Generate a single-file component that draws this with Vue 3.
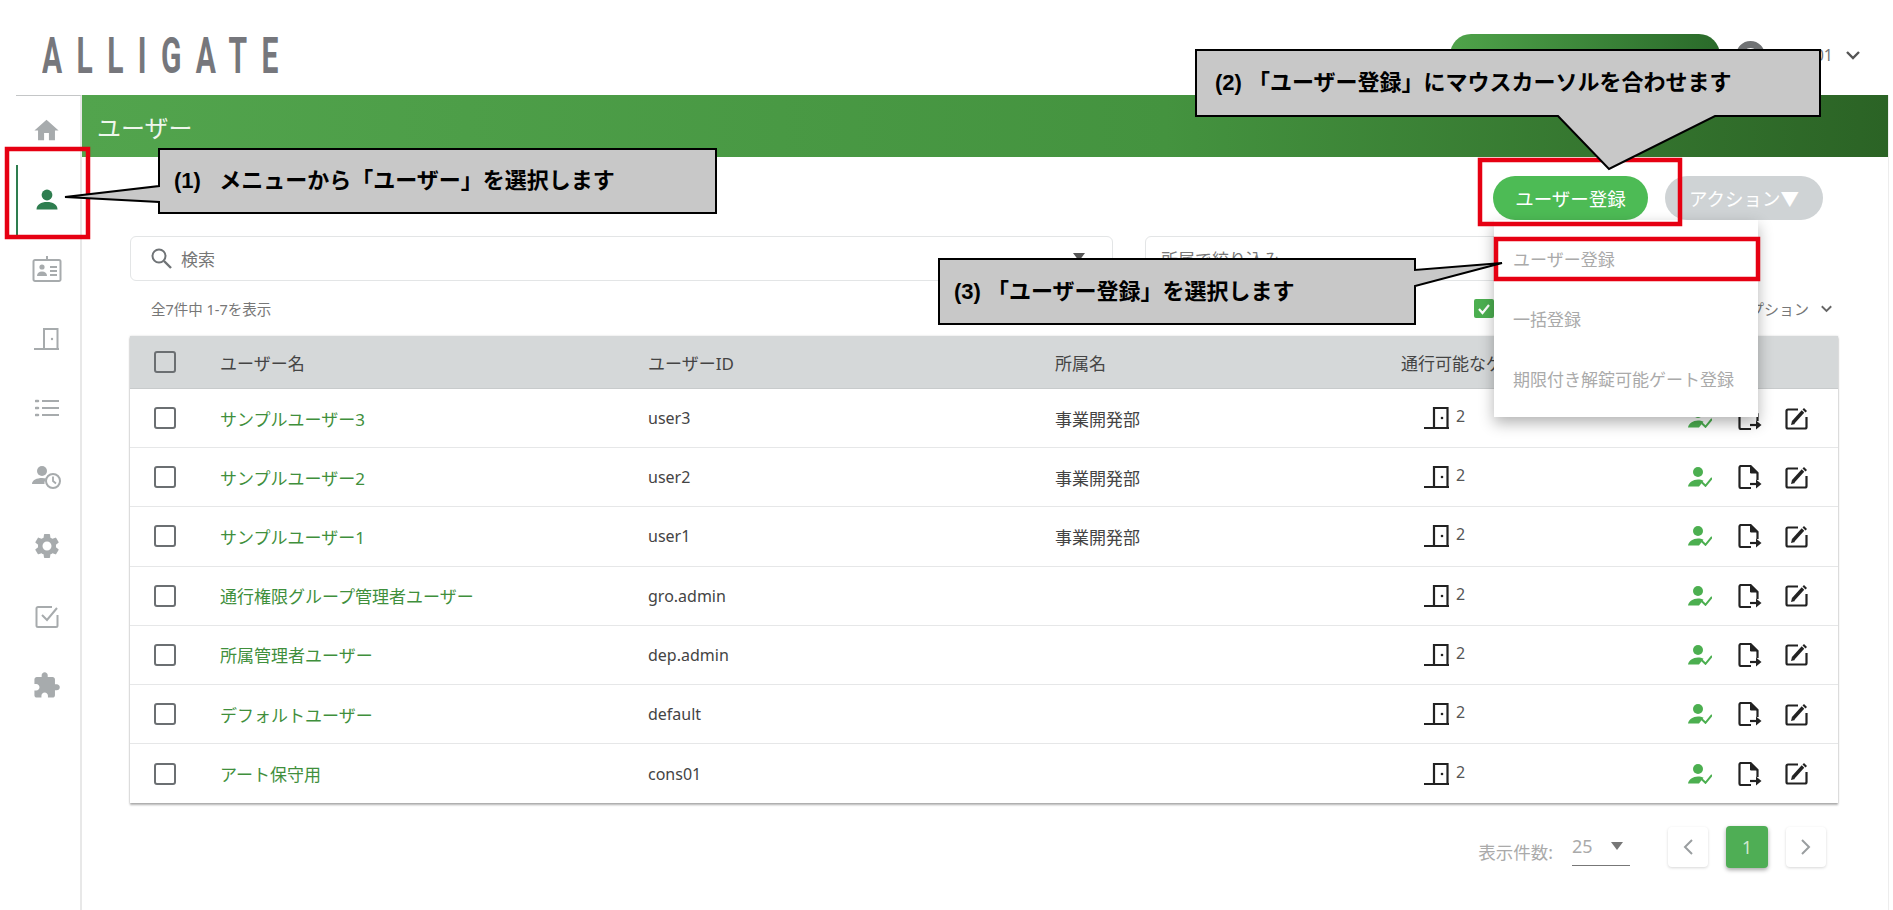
<script setup>
const users = [
  { name: "サンプルユーザー3", id: "user3", dept: "事業開発部" },
  { name: "サンプルユーザー2", id: "user2", dept: "事業開発部" },
  { name: "サンプルユーザー1", id: "user1", dept: "事業開発部" },
  { name: "通行権限グループ管理者ユーザー", id: "gro.admin", dept: "" },
  { name: "所属管理者ユーザー", id: "dep.admin", dept: "" },
  { name: "デフォルトユーザー", id: "default", dept: "" },
  { name: "アート保守用", id: "cons01", dept: "" },
]
</script>

<template>
  <div class="page">
    <header class="top">
      <div class="logo">ALLIGATE</div>
      <div class="top-right">
        <div class="top-pill"></div>
        <div class="avatar"></div>
        <span class="account">cons01</span>
        <svg class="chev" viewBox="0 0 14 9"><path d="M1 1l6 6 6-6" /></svg>
      </div>
    </header>

    <div class="body">
      <aside class="side">
        <div class="nav-item">
          <svg width="29" height="29" viewBox="0 0 24 24" fill="#a7abad"><path d="M10 20v-6h4v6h5v-8h3L12 3 2 12h3v8z" /></svg>
        </div>
        <div class="nav-item active">
          <svg width="22" height="21" viewBox="0 0 22 21" fill="#2e7d4f">
            <circle cx="11" cy="6" r="5.4" />
            <path d="M0.5 20.5c0-5 4.5-7.5 10.500-7.500s10.500 2.500 10.500 7.500z" />
          </svg>
        </div>
        <div class="nav-item">
          <svg width="30" height="26" viewBox="0 0 30 26" fill="none" stroke="#a7abad" stroke-width="2">
            <path d="M3 4h24a1.500 1.500 0 0 1 1.500 1.500v18a1.500 1.500 0 0 1-1.500 1.500H3a1.500 1.500 0 0 1-1.500-1.500v-18A1.500 1.500 0 0 1 3 4z" />
            <path d="M15 0v5M18 11h7M18 15h7M18 19h7" />
            <circle cx="10" cy="11" r="2.600" fill="#a7abad" stroke="none" />
            <path d="M5 20c0-3 2-4.500 5-4.500s5 1.500 5 4.500z" fill="#a7abad" stroke="none" />
          </svg>
        </div>
        <div class="nav-item">
          <svg width="25" height="22" viewBox="0 0 25 22" fill="none" stroke="#a7abad" stroke-width="2">
            <path d="M0 21h25M10 21V1h13.500v20" />
            <circle cx="18" cy="11" r="1.200" fill="#a7abad" stroke="none" />
          </svg>
        </div>
        <div class="nav-item">
          <svg width="24" height="20" viewBox="0 0 24 20" fill="none" stroke="#a7abad" stroke-width="2.200">
            <path d="M7 3h17M7 10h17M7 17h17" />
            <path d="M1 3h2M1 10h2M1 17h2" stroke-width="2.600" stroke-linecap="round" />
          </svg>
        </div>
        <div class="nav-item">
          <svg width="30" height="25" viewBox="0 0 30 25">
            <circle cx="10" cy="6" r="5" fill="#a7abad" />
            <path d="M0 19c0-4 5-6 10-6 1.500 0 3 .2 4.500.6-1.500 1.500-2.200 3.400-2 5.400z" fill="#a7abad" />
            <circle cx="21" cy="16" r="7" fill="#fff" stroke="#a7abad" stroke-width="2" />
            <path d="M21 11.500V16l3 2.500" fill="none" stroke="#a7abad" stroke-width="1.800" />
          </svg>
        </div>
        <div class="nav-item">
          <svg width="30" height="30" viewBox="0 0 24 24" fill="#a7abad"><path d="M19.14 12.940c.04-.3.06-.61.06-.94 0-.32-.02-.64-.07-.94l2.030-1.580a.49.49 0 0 0 .12-.61l-1.920-3.320a.488.488 0 0 0-.59-.22l-2.390.96c-.5-.38-1.030-.7-1.620-.94l-.36-2.540a.484.484 0 0 0-.48-.41h-3.840c-.24 0-.43.17-.47.41l-.36 2.540c-.59.24-1.130.57-1.620.94l-2.390-.96c-.22-.08-.47 0-.59.22L2.740 8.870c-.12.21-.08.47.12.61l2.030 1.580c-.05.3-.09.63-.09.94s.02.64.07.94l-2.030 1.580a.49.49 0 0 0-.12.61l1.920 3.320c.12.22.37.29.59.22l2.390-.96c.5.38 1.030.7 1.620.94l.36 2.540c.05.24.24.41.48.41h3.840c.24 0 .44-.17.47-.41l.36-2.540c.59-.24 1.130-.56 1.620-.94l2.390.96c.22.08.47 0 .59-.22l1.920-3.320c.12-.22.07-.47-.12-.61l-2.010-1.580zM12 15.600c-1.980 0-3.600-1.620-3.600-3.600s1.620-3.600 3.600-3.600 3.600 1.620 3.600 3.600-1.620 3.600-3.600 3.600z" /></svg>
        </div>
        <div class="nav-item">
          <svg width="24" height="24" viewBox="0 0 24 24" fill="none" stroke="#a7abad" stroke-width="2">
            <path d="M17 3H3a1.500 1.500 0 0 0-1.500 1.500v17A1.500 1.500 0 0 0 3 23h18a1.500 1.500 0 0 0 1.500-1.500V11" />
            <path d="M7 11l5 5 10-12" />
          </svg>
        </div>
        <div class="nav-item">
          <svg width="29" height="29" viewBox="0 0 24 24" fill="#a7abad"><path d="M20.500 11H19V7c0-1.100-.9-2-2-2h-4V3.500C13 2.120 11.880 1 10.500 1S8 2.120 8 3.500V5H4c-1.100 0-1.990.9-1.990 2v3.800H3.500c1.490 0 2.700 1.210 2.700 2.700s-1.210 2.700-2.700 2.700H2V20c0 1.100.9 2 2 2h3.800v-1.500c0-1.490 1.210-2.700 2.700-2.700 1.490 0 2.700 1.210 2.700 2.700V22H17c1.100 0 2-.9 2-2v-4h1.500c1.380 0 2.500-1.120 2.500-2.500S21.880 11 20.500 11z" /></svg>
        </div>
      </aside>

      <main class="main">
        <div class="title-bar">ユーザー</div>

        <div class="content">
          <div class="actions">
            <button class="btn btn-green">ユーザー登録</button>
            <button class="btn btn-gray">アクション▼</button>
          </div>

          <div class="filters">
            <div class="field field-search">
              <svg width="21" height="21" viewBox="0 0 21 21" fill="none" stroke="#6f7376" stroke-width="2">
                <circle cx="8" cy="8" r="6.500" />
                <path d="M13 13l7 7" stroke-width="2.400" />
              </svg>
              <span>検索</span>
              <i class="caret"></i>
            </div>
            <div class="field field-dept"><span>所属で絞り込み</span></div>
          </div>

          <div class="info">
            <span>全7件中 1-7を表示</span>
            <span class="info-right">
              <i class="green-check">
                <svg width="14" height="14" viewBox="0 0 14 14" fill="none" stroke="#fff" stroke-width="2.200"><path d="M2 7l3.500 4L12 3" /></svg>
              </i>
              <span class="option">オプション</span>
              <svg class="chev small" viewBox="0 0 14 9"><path d="M1 1l6 6 6-6" /></svg>
            </span>
          </div>

          <div class="table">
            <div class="row head">
              <i class="box"></i>
              <span>ユーザー名</span>
              <span>ユーザーID</span>
              <span>所属名</span>
              <span>通行可能なゲート</span>
              <span></span>
            </div>
            <div v-for="u in users" :key="u.id" class="row">
              <i class="box"></i>
              <span class="name">{{ u.name }}</span>
              <span class="uid">{{ u.id }}</span>
              <span>{{ u.dept }}</span>
              <span class="gates">
                <svg width="25" height="22" viewBox="0 0 25 22" fill="none" stroke="#222" stroke-width="2.200">
                  <path d="M0 21h25M10 21V1h13.500v20" />
                  <circle cx="18" cy="11" r="1.300" fill="#222" stroke="none" />
                </svg>
                <span class="gate-count">2</span>
              </span>
              <span class="row-icons">
                <svg width="24" height="20" viewBox="0 0 24 20">
                  <circle cx="10" cy="5" r="5" fill="#4caf50" />
                  <path d="M0 19.500c.5-4 5-7 10-7 2 0 4 .4 5.500 1.200L11 19.500z" fill="#4caf50" />
                  <path d="M13 14.500l4.500 4.300L24 11" fill="none" stroke="#4caf50" stroke-width="2" />
                </svg>
                <svg width="24" height="24" viewBox="0 0 24 24" fill="none" stroke="#222" stroke-width="2.200">
                  <path d="M13 23H3a1.500 1.500 0 0 1-1.500-1.500v-19A1.500 1.500 0 0 1 3 1h9.500l7 7v7" />
                  <path d="M12.500 1v7h7z" fill="#222" stroke-width="1" />
                  <path d="M12 19h7" />
                  <path d="M18 14.500l5.500 4.500-5.500 4.500z" fill="#222" stroke="none" />
                </svg>
                <svg width="23" height="23" viewBox="0 0 23 23" fill="none" stroke="#222" stroke-width="2.200">
                  <path d="M13 2.500H3A1.500 1.500 0 0 0 1.500 4v16A1.500 1.500 0 0 0 3 21.500h17a1.500 1.500 0 0 0 1.500-1.500V10" />
                  <path d="M8 15.500l10-11" stroke-width="3.400" />
                  <path d="M6 18l1-4 3 3z" fill="#222" stroke="none" />
                  <path d="M19 1l3 3-1.500 1.500-3-3z" fill="#222" stroke="none" />
                </svg>
              </span>
            </div>
          </div>

          <div class="pager">
            <span class="pager-label">表示件数:</span>
            <span class="page-size">25<i class="caret small"></i></span>
            <span class="page-btn">
              <svg width="10" height="16" viewBox="0 0 10 16" fill="none" stroke="#9a9ea0" stroke-width="2"><path d="M9 1L2 8l7 7" /></svg>
            </span>
            <span class="page-btn current">1</span>
            <span class="page-btn">
              <svg width="10" height="16" viewBox="0 0 10 16" fill="none" stroke="#9a9ea0" stroke-width="2"><path d="M1 1l7 7-7 7" /></svg>
            </span>
          </div>
        </div>
      </main>
    </div>

    <!-- ボタンのドロップダウン -->
    <div class="menu">
      <div class="menu-item">ユーザー登録</div>
      <div class="menu-item">一括登録</div>
      <div class="menu-item">期限付き解錠可能ゲート登録</div>
    </div>

    <!-- マニュアル用の注釈 -->
    <svg class="notes" width="1893" height="910" viewBox="0 0 1893 910">
      <g fill="none" stroke="#e60012" stroke-width="4.500">
        <rect x="7" y="149" width="81" height="88" />
        <rect x="1480" y="160" width="200" height="64" />
        <rect x="1496" y="239" width="262" height="40" />
      </g>
      <g fill="#c8c8c8" stroke="#000" stroke-width="2">
        <path d="M159 149H716V213H159V202L65 197L159 186z" />
        <path d="M1196 50H1820V116H1715L1609 169L1558 116H1196z" />
        <path d="M939 259H1415V270L1502 263L1415 286V324H939z" />
      </g>
    </svg>
    <div class="note note-1">(1)&nbsp;&nbsp; メニューから「ユーザー」を選択します</div>
    <div class="note note-2">(2) 「ユーザー登録」にマウスカーソルを合わせます</div>
    <div class="note note-3">(3) 「ユーザー登録」を選択します</div>
  </div>
</template>

<style>
body {
  margin: 0;
  background: #fff;
}
</style>

<style scoped>
.page {
  position: relative;
  width: 1893px;
  height: 910px;
  overflow: hidden;
  display: flex;
  flex-direction: column;
  background: #fff;
  color: #555;
  font-family: "Noto Sans", "Noto Sans CJK JP", sans-serif;
  font-size: 17px;
}
.top {
  height: 95px;
  flex: none;
  display: flex;
  align-items: flex-start;
  padding: 0 33px 0 42px;
  box-sizing: border-box;
}
.logo {
  flex: none;
  width: 230px;
  margin-top: 26px;
  font-family: Roboto, sans-serif;
  font-weight: 700;
  font-size: 50px;
  line-height: 60px;
  letter-spacing: 24px;
  color: #76777c;
  white-space: nowrap;
  transform: scaleX(0.6);
  transform-origin: left center;
}
.top-right {
  margin-left: auto;
  display: flex;
  align-items: center;
  margin-top: 34px;
}
.top-pill {
  width: 270px;
  height: 42px;
  border-radius: 21px;
  background: linear-gradient(90deg, #4fa34a, #2a6a2a);
}
.avatar {
  width: 29px;
  height: 29px;
  margin-left: 16px;
  box-sizing: border-box;
  border: 7px solid #707274;
  border-radius: 50%;
}
.account {
  margin-left: 15px;
  color: #777;
  font-size: 16px;
}
.chev {
  width: 14px;
  height: 9px;
  margin-left: 13px;
  fill: none;
  stroke: #555;
  stroke-width: 2.4;
}
.chev.small {
  width: 11px;
  height: 8px;
  margin-left: 12px;
  stroke: #666;
}
.body {
  flex: 1;
  display: flex;
  min-height: 0;
}
.side {
  flex: none;
  width: 66px;
  margin-left: 16px;
  box-sizing: border-box;
  border-top: 1px solid #c4c6c7;
  border-right: 2px solid #e8e8e8;
}
.nav-item {
  height: 69.3px;
  box-sizing: border-box;
  padding-right: 5px;
  border-left: 2px solid transparent;
  display: flex;
  align-items: center;
  justify-content: center;
}
.nav-item.active {
  border-left-color: #2e7d4f;
}
.main {
  flex: none;
  width: 1807px;
  box-sizing: border-box;
  border-right: 1px solid #ededed;
  display: flex;
  flex-direction: column;
}
.title-bar {
  height: 62px;
  flex: none;
  display: flex;
  align-items: center;
  padding-left: 15px;
  background: linear-gradient(90deg, #52a44d, #44933f 60%, #2b6325);
  color: #eef6ec;
  font-size: 24px;
}
.content {
  padding: 0 50px 0 48px;
}
.actions {
  display: flex;
  justify-content: flex-end;
  gap: 17px;
  padding: 19px 15px 16px 0;
}
.btn {
  height: 44px;
  border: none;
  border-radius: 22px;
  padding: 0;
  color: #fff;
  font: inherit;
  font-size: 18.5px;
}
.btn-green {
  width: 155px;
  background: #4dbb55;
}
.btn-gray {
  width: 158px;
  background: #cfd3d5;
}
.filters {
  display: flex;
  gap: 32px;
  height: 45px;
}
.field {
  box-sizing: border-box;
  display: flex;
  align-items: center;
  border: 1px solid #e3e5e6;
  border-radius: 6px;
  color: #777;
  font-size: 17px;
}
.field-search {
  width: 983px;
  gap: 9px;
  padding: 0 27px 0 20px;
}
.field-search .caret {
  margin: -4px 0 0 auto;
}
.field-dept {
  width: 360px;
  padding-left: 15px;
}
.caret {
  display: inline-block;
  width: 0;
  height: 0;
  border: 6px solid transparent;
  border-top: 8px solid #555;
  border-bottom: 0;
}
.info {
  height: 55px;
  display: flex;
  align-items: center;
  justify-content: space-between;
  padding: 0 6px 0 21px;
  color: #777;
  font-size: 14.5px;
}
.info-right {
  display: flex;
  align-items: center;
}
.green-check {
  display: flex;
  align-items: center;
  justify-content: center;
  width: 20px;
  height: 19px;
  margin-right: 240px;
  border-radius: 2px;
  background: #4caf50;
}
.option {
  font-size: 15px;
}
.table {
  width: 1708px;
  box-shadow: 0 2px 2px rgba(0, 0, 0, 0.3), 0 0 2px rgba(0, 0, 0, 0.15);
}
.row {
  display: grid;
  grid-template-columns: 90px 428px 407px 346px 287px 1fr;
  align-items: center;
  height: 59.2px;
  box-sizing: border-box;
  border-bottom: 1px solid #e6e7e8;
  color: #444;
  font-size: 17px;
}
.row:last-child {
  border-bottom: none;
}
.row.head {
  height: 53px;
  background: #d5d8d9;
  border-bottom: 1px solid #c8cbcc;
}
.box {
  display: block;
  width: 22px;
  height: 22px;
  margin-left: 24px;
  box-sizing: border-box;
  border: 2px solid #6b6f72;
  border-radius: 3px;
}
.name {
  color: #3f8f3c;
  white-space: nowrap;
}
.uid {
  font-size: 16px;
}
.gates {
  display: flex;
  align-items: center;
  padding-left: 23px;
}
.gate-count {
  margin: -4px 0 0 7px;
  color: #555;
  font-size: 16px;
}
.row-icons {
  display: flex;
  align-items: center;
  gap: 26px;
}
.row-icons svg:last-child {
  margin-left: -3px;
}
.pager {
  display: flex;
  align-items: center;
  justify-content: flex-end;
  height: 42px;
  margin-top: 23px;
  padding-right: 12px;
  width: 1696px;
  color: #aaa;
  font-size: 17.5px;
}
.pager-label {
  margin: 8px 19px 0 0;
}
.page-size {
  width: 58px;
  height: 33px;
  display: flex;
  align-items: flex-start;
  justify-content: space-between;
  box-sizing: border-box;
  padding-right: 7px;
  margin: 4px 38px 0 0;
  border-bottom: 1px solid #777;
  line-height: 26px;
  font-size: 18px;
}
.caret.small {
  margin-top: 9px;
  border-top-color: #777;
}
.page-btn {
  width: 40px;
  height: 40px;
  display: flex;
  align-items: center;
  justify-content: center;
  border-radius: 4px;
  background: #fff;
  box-shadow: 0 1px 3px rgba(0, 0, 0, 0.16);
}
.page-btn.current {
  width: 42px;
  height: 42px;
  margin: 0 18px;
  background: #4fae55;
  color: #cfe8cf;
  box-shadow: 0 2px 4px rgba(0, 0, 0, 0.35);
}
.menu {
  position: absolute;
  left: 1494px;
  top: 220px;
  width: 264px;
  height: 197px;
  box-sizing: border-box;
  padding-top: 10px;
  background: #fff;
  box-shadow: 0 6px 14px rgba(0, 0, 0, 0.3);
  color: #aaa;
}
.menu-item {
  height: 60px;
  line-height: 60px;
  padding-left: 19px;
  white-space: nowrap;
}
.notes {
  position: absolute;
  left: 0;
  top: 0;
}
.note {
  position: absolute;
  color: #000;
  font-family: "Liberation Sans", "Noto Sans CJK JP", sans-serif;
  font-size: 22px;
  font-weight: 700;
  line-height: 30px;
  white-space: nowrap;
}
.note-1 {
  left: 174px;
  top: 166px;
}
.note-2 {
  left: 1215px;
  top: 68px;
}
.note-3 {
  left: 954px;
  top: 277px;
}
</style>
